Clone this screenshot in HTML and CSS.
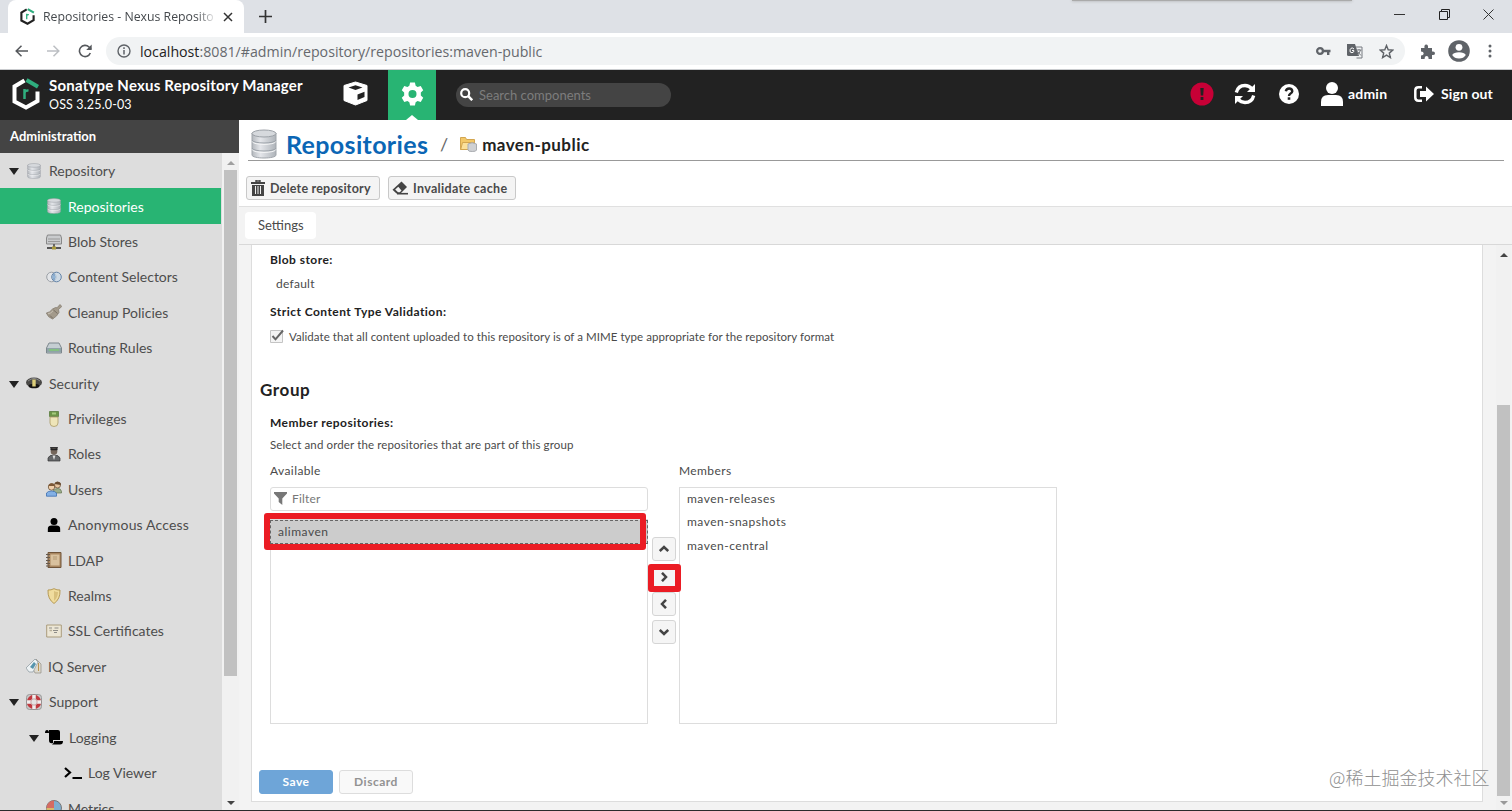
FILE: index.html
```
<!DOCTYPE html>
<html lang="en">
<head>
  <meta charset="UTF-8" />
  <title>Repositories - Nexus Repository Manager</title>
  <link rel="stylesheet" href="styles.css">
</head>
<body>
  <svg width="0" height="0" class="defs">
    <defs>
      <linearGradient id="metal" x1="0" x2="1" y1="0" y2="0">
        <stop offset="0" stop-color="#b4b8bd"/><stop offset=".35" stop-color="#e4e6ea"/><stop offset="1" stop-color="#aeb3b9"/>
      </linearGradient>
      <symbol id="db" viewBox="0 0 26 30">
        <path d="M1 4v22c0 4 24 4 24 0V4z" fill="url(#metal)" stroke="#a0a5ab"/>
        <ellipse cx="13" cy="4.5" rx="12" ry="3.5" fill="#d6d9dd" stroke="#9ca1a7"/>
        <path d="M1 11c1 4 23 4 24 0M1 19c1 4 23 4 24 0" fill="none" stroke="#9ca2a9" stroke-width="1"/>
        <path d="M1 12.400c1 4 23 4 24 0M1 20.400c1 4 23 4 24 0" fill="none" stroke="#f5f6f7"/>
      </symbol>
      <symbol id="person" viewBox="0 0 22 24">
        <circle cx="11" cy="6" r="6"/><path d="M0 24v-4q0-7 7-7h8q7 0 7 7v4z"/>
      </symbol>
      <symbol id="hexlogo" viewBox="0 0 28 32">
        <path d="M12.500 2.500L2.500 8.500v15L14 29.500l11.500-6.500V13.500" fill="none" stroke="currentColor" stroke-width="4"/>
        <path d="M14.500 2l11.500 6.800" fill="none" stroke="#2fae7e" stroke-width="4"/>
        <path d="M12.500 21v-10M12.500 14.500q1-2.500 4-1.800" fill="none" stroke="#2fae7e" stroke-width="2.500"/>
      </symbol>
    </defs>
  </svg>

  <div class="tabstrip">
    <div class="tab">
      <svg class="favicon" width="15" height="17"><use href="#hexlogo"/></svg>
      <span class="tab-title">Repositories - Nexus Reposito</span>
      <svg width="10" height="10" viewBox="0 0 10 10"><path d="M1 1l8 8M9 1l-8 8" stroke="#333" stroke-width="1.500"/></svg>
    </div>
    <svg class="newtab" width="13" height="13" viewBox="0 0 13 13"><path d="M6.500 0v13M0 6.500h13" stroke="#333" stroke-width="1.700"/></svg>
    <div class="strip-shadow"></div>
    <div class="window-buttons">
      <svg width="11" height="11" viewBox="0 0 11 11"><path d="M0 5.500h11" stroke="#333"/></svg>
      <svg width="11" height="11" viewBox="0 0 11 11"><path d="M.5 2.500h8v8h-8zM2.500 2.500v-2h8v8h-2" fill="none" stroke="#222"/></svg>
      <svg width="11" height="11" viewBox="0 0 11 11"><path d="M.5.5l10 10M10.500.5l-10 10" stroke="#333"/></svg>
    </div>
  </div>

  <div class="toolbar">
    <svg width="13" height="12" viewBox="0 0 13 12"><path d="M13 6H1M6.500 .7L1.200 6l5.300 5.300" fill="none" stroke="#55585c" stroke-width="1.500"/></svg>
    <svg width="13" height="12" viewBox="0 0 13 12"><path d="M0 6h12M6.500 .7L11.800 6l-5.300 5.300" fill="none" stroke="#bcbfc3" stroke-width="1.500"/></svg>
    <svg width="14" height="14" viewBox="0 0 14 14"><path d="M12.300 9A5.600 5.600 0 1 1 11 3L13 5" fill="none" stroke="#55585c" stroke-width="1.600"/><path d="M13.700 .5v5.500H8.200z" fill="#55585c"/></svg>
    <div class="address">
      <svg width="14" height="14" viewBox="0 0 14 14"><circle cx="7" cy="7" r="6" fill="none" stroke="#5f6368" stroke-width="1.400"/><path d="M7 6v4.500M7 3.300v1.600" stroke="#5f6368" stroke-width="1.500"/></svg>
      <span class="url"><b>localhost</b>:8081/#admin/repository/repositories:maven-public</span>
      <svg class="key" width="15" height="10" viewBox="0 0 15 10"><circle cx="4" cy="5" r="2.900" fill="none" stroke="#5f6368" stroke-width="2.200"/><path d="M7 5h7.500M12.200 5v4" stroke="#5f6368" stroke-width="2.400"/></svg>
      <svg width="16" height="15" viewBox="0 0 16 15"><path d="M0 0h8l4 12H1.500Q0 12 0 10.500z" fill="#5f6368"/><path d="M9 3h6v11H9.500" fill="none" stroke="#777b80"/><path d="M7 5Q5.500 3.300 4 4.300T3.200 8Q5 9.700 6.800 7.700V6.500H5" fill="none" stroke="#fff"/><path d="M9.500 6h5M12 5v1M13.500 6q-1 4-3.500 5M10.500 7.500l3.500 4" fill="none" stroke="#777b80"/></svg>
      <svg width="15" height="15" viewBox="0 0 15 15"><path d="M7.500 1.500l1.700 4.300 4.600.3-3.500 3 1.100 4.500-3.900-2.500-3.900 2.500 1.100-4.500-3.500-3 4.600-.3z" fill="none" stroke="#5f6368" stroke-width="1.400"/></svg>
    </div>
    <svg width="15" height="15" viewBox="0 0 15 15"><path d="M1 4h3.500q-.6-3.500 1.700-3.500T8 4h4v3.500q3-.5 3 1.700t-3 1.800v4H8.600q0-3-2-3t-2 3H1v-3.600q2.700-.2 2.700-2T1 7.500z" fill="#5f6368"/></svg>
    <svg class="profile" width="22" height="22" viewBox="0 0 22 22"><circle cx="11" cy="11" r="10.800" fill="#5f6368"/><circle cx="11" cy="7.300" r="3.400" fill="#fff"/><path d="M4.200 15q1.600-2.800 6.800-2.800t6.800 2.800q-2.200 3.600-6.800 3.600T4.200 15z" fill="#fff"/></svg>
    <svg class="dots" width="4" height="14" viewBox="0 0 4 14" fill="#5f6368"><circle cx="2" cy="2" r="1.500"/><circle cx="2" cy="7" r="1.500"/><circle cx="2" cy="12" r="1.500"/></svg>
  </div>

  <div class="header">
    <svg class="logo" width="28" height="32"><use href="#hexlogo"/></svg>
    <div class="product">
      <div class="product-name">Sonatype Nexus Repository Manager</div>
      <div class="product-version">OSS 3.25.0-03</div>
    </div>
    <div class="mode">
      <svg width="25" height="25" viewBox="0 0 25 25"><path d="M12.500 1L24 4.500v15L12.500 24 1 19.500v-15z" fill="#fff" stroke="#fff" stroke-linejoin="round"/><path d="M5.500 6.500l7-2.300 7 2.300-7 2.500zM14.500 13.500l7-2.800V16l-7 3z" fill="#222"/></svg>
    </div>
    <div class="mode active">
      <svg width="23" height="24" viewBox="0 0 24 24"><path fill="#fff" fill-rule="evenodd" d="M9.500 0h5l.8 3.400 2 1.200 3.300-1 2.600 4.400-2.500 2.400v3.200l2.500 2.400-2.600 4.400-3.300-1-2 1.200-.8 3.400h-5l-.8-3.400-2-1.200-3.300 1L.8 16l2.500-2.400v-3.200L.8 8l2.600-4.400 3.300 1 2-1.200zM12 7.800a4.200 4.200 0 1 0 0 8.400 4.200 4.200 0 1 0 0-8.400z"/></svg>
    </div>
    <div class="search">
      <svg width="13" height="13" viewBox="0 0 13 13"><circle cx="5.200" cy="5.200" r="4" fill="none" stroke="#fff" stroke-width="2.200"/><path d="M8.200 8.200l4 4" stroke="#fff" stroke-width="2.500"/></svg>
      <span>Search components</span>
    </div>
    <div class="header-right">
      <svg class="alert" width="24" height="24" viewBox="0 0 24 24"><circle cx="12" cy="12" r="11.500" fill="#c70036"/><path d="M10.300 6h3.400l-.5 7.500h-2.400zM10.600 15h2.800v3h-2.800z" fill="#222"/></svg>
      <svg class="refresh" width="22" height="22" viewBox="0 0 22 22"><path d="M2.300 9.500Q4 2.500 11 2.500q4 0 7 3.300M19.700 12.500Q18 19.500 11 19.500q-4 0-7-3.300" fill="none" stroke="#fff" stroke-width="3.300"/><path d="M21 1v8h-8zM1 21v-8h8z" fill="#fff"/></svg>
      <svg class="help" width="20" height="20" viewBox="0 0 20 20"><circle cx="10" cy="10" r="10" fill="#fff"/><path d="M6.800 7.300Q7.300 4.500 10.200 4.500T13.300 7.300Q13.300 8.600 11.300 9.700 10 10.500 10 12" fill="none" stroke="#222" stroke-width="2.400"/><path d="M8.700 13.300h2.600v2.500H8.700z" fill="#222"/></svg>
      <svg class="user" width="22" height="24" fill="#fff"><use href="#person"/></svg>
      <span class="admin">admin</span>
      <svg class="exit" width="20" height="16" viewBox="0 0 20 16"><path d="M8 1.300H4.500Q1.300 1.300 1.300 4.500v7q0 3.200 3.200 3.200H8" fill="none" stroke="#fff" stroke-width="2.500"/><path d="M6 5h6V.5L20 8l-8 7.500V11H6z" fill="#fff"/></svg>
      <span class="signout">Sign out</span>
    </div>
  </div>

  <div class="app">
    <div class="sidebar">
      <div class="sidebar-title">Administration</div>
      <div class="sidebar-body">
        <div class="tree">
          <div class="node top"><i class="arrow"></i><svg width="16" height="16"><use href="#db"/></svg><span>Repository</span></div>
          <div class="node leaf selected"><svg width="16" height="16"><use href="#db"/></svg><span>Repositories</span></div>
          <div class="node leaf">
            <svg width="16" height="16" viewBox="0 0 16 16"><path d="M1.500 1h13l1 3v6h-15V4z" fill="#c9cbcd" stroke="#888"/><path d="M2 5h12M2 7.500h12" stroke="#999"/><path d="M8 10v4" stroke="#666" stroke-width="2"/><path d="M1 14h14" stroke="#555" stroke-width="2"/><path d="M6 12.500h4v3H6z" fill="#a99a3c"/></svg>
            <span>Blob Stores</span></div>
          <div class="node leaf">
            <svg width="16" height="16" viewBox="0 0 16 16"><circle cx="5.500" cy="8" r="4.800" fill="#e3e5e8" stroke="#9ba0a6"/><circle cx="10.500" cy="8" r="4.800" fill="#c8d8e8" fill-opacity=".7" stroke="#6484a8"/><path d="M8 4.500q-2.500 3.500 0 7 2.500-3.500 0-7z" fill="#9fc2e4" stroke="#6a8fb5" stroke-width=".6"/></svg>
            <span>Content Selectors</span></div>
          <div class="node leaf">
            <svg width="16" height="16" viewBox="0 0 16 16"><path d="M14 .5l1.800 2-3.300 3 .5 3q-2 4-6.500 6.500Q2 13.500 .3 9q3.700-.5 6.200-4l3-1.500 1.500.3z" fill="#a39a8b" stroke="#81796c" stroke-width=".7"/><path d="M2 9.800q3-.3 5-3" fill="none" stroke="#c9c2b5"/><path d="M4 11.500l3 3M7.500 6l4 3.500" stroke="#776f64"/></svg>
            <span>Cleanup Policies</span></div>
          <div class="node leaf">
            <svg width="16" height="16" viewBox="0 0 16 16"><path d="M3 3h10l2.500 5v5H.5V8z" fill="#c5ced2" stroke="#7c868c"/><path d="M1 8h14v4.500H1z" fill="#8fa3a7"/><path d="M3 10h10" stroke="#7fd06f" stroke-width="1.300"/></svg>
            <span>Routing Rules</span></div>
          <div class="node top"><i class="arrow"></i>
            <svg width="16" height="16" viewBox="0 0 16 16"><ellipse cx="8" cy="7.500" rx="8" ry="5" fill="#4a4947"/><ellipse cx="8" cy="11" rx="5.500" ry="2.300" fill="#161514"/><path d="M2 6q6-5 12 0" stroke="#8a8a88" fill="none"/><path d="M6.300 4.500h3.400v7H6.300z" fill="#ddcf7a"/></svg>
            <span>Security</span></div>
          <div class="node leaf">
            <svg width="16" height="16" viewBox="0 0 16 16"><path d="M3.500 .5h9v5h-9z" fill="#6d9447" stroke="#4f7330" stroke-width=".7"/><path d="M6 1.500h4v2H6z" fill="#a6cb7c"/><path d="M4 6h8v6q0 3.500-4 3.500T4 12z" fill="#eee5b9" stroke="#a99b66" stroke-width=".8"/></svg>
            <span>Privileges</span></div>
          <div class="node leaf">
            <svg width="16" height="16" viewBox="0 0 16 16"><path d="M4 1h8l-1 3H5z" fill="#333"/><circle cx="8" cy="5.500" r="3.300" fill="#75675c"/><path d="M4.500 3.500h7" stroke="#222" stroke-width="1.500"/><path d="M2 15v-3q1-3 6-3t6 3v3z" fill="#66686a" stroke="#333" stroke-width=".7"/><path d="M6.500 9.500h3L8 14z" fill="#ddd"/></svg>
            <span>Roles</span></div>
          <div class="node leaf">
            <svg width="16" height="16" viewBox="0 0 16 16"><circle cx="11.500" cy="4" r="3" fill="#e7c49f" stroke="#6c5236" stroke-width=".8"/><path d="M7.500 12V9.500Q9 7.500 12 7.500t3.500 3V12z" fill="#9cae8c" stroke="#62724f" stroke-width=".7"/><path d="M8.700 3q1-3 4-2t2 3" fill="#674a30"/><circle cx="5.500" cy="6" r="3.200" fill="#f0cfab" stroke="#6c5236" stroke-width=".8"/><path d="M2.500 5Q3 2 6 2.300T8.700 5z" fill="#7c5836"/><path d="M.5 15.200V12Q2 10 5.500 10t5 2v3.200z" fill="#83b0e5" stroke="#3c6eae" stroke-width=".8"/></svg>
            <span>Users</span></div>
          <div class="node leaf anon"><svg width="16" height="14" viewBox="0 0 22 24"><use href="#person"/></svg><span>Anonymous Access</span></div>
          <div class="node leaf">
            <svg width="16" height="16" viewBox="0 0 16 16"><path d="M2 .5h13v15H2z" fill="#a98761" stroke="#70553a"/><path d="M4.500 2.500h9v11h-9z" fill="#d9c19e"/><path d="M7 5h4M7 7h4" stroke="#b39a75"/><path d="M0 2.500h4M0 5.500h4M0 8.500h4M0 11.500h4M0 14h4" stroke="#66594d"/></svg>
            <span>LDAP</span></div>
          <div class="node leaf">
            <svg width="16" height="16" viewBox="0 0 16 16"><path d="M8 .7q3 1.600 6 1.300.5 9-6 13.500Q1.500 11 2 2q3 .3 6-1.300z" fill="#f0dc9e" stroke="#b69a56"/><path d="M8 3q2 1.200 4 1-.2 6-4 9z" fill="#d9c07d"/></svg>
            <span>Realms</span></div>
          <div class="node leaf">
            <svg width="16" height="16" viewBox="0 0 16 16"><path d="M.7 2h14.600v12H.7z" fill="#ece6d5" stroke="#aa9c7c"/><path d="M3 5h3M8.500 5h4M7 7.500h5M8 9.500h3" stroke="#8e8d89"/><path d="M3.500 7.500h2.500" stroke="#b9b09a" stroke-width="1.500"/></svg>
            <span>SSL Certificates</span></div>
          <div class="node mid">
            <svg width="16" height="16" viewBox="0 0 16 16"><path d="M10 1l5 5v9H9l-2-4z" fill="#ddd9cd" stroke="#8f8c84" stroke-width=".7"/><path d="M0 10L9 1l3 3-5 10H3z" fill="#edf2f4" stroke="#87939b" stroke-width=".7"/><path d="M4 9l4-5 2 2-3 5z" fill="#5795ad"/><path d="M12.500 5v8" stroke="#b99553"/></svg>
            <span>IQ Server</span></div>
          <div class="node top"><i class="arrow"></i>
            <svg width="16" height="16" viewBox="0 0 16 16"><rect x=".5" y=".5" width="15" height="15" rx="3" fill="#c9c9c9" stroke="#999"/><circle cx="8" cy="8" r="5.200" fill="none" stroke="#c0393f" stroke-width="4"/><path d="M8 1v14M1 8h14" stroke="#eee" stroke-width="3.500"/><circle cx="8" cy="8" r="3.200" fill="#e4e4e4" stroke="#b9787b" stroke-width=".6"/></svg>
            <span>Support</span></div>
          <div class="node sub"><i class="arrow"></i>
            <svg width="18" height="15" viewBox="0 0 18 15"><path d="M0 3q0-3 2-3t2 3zM4 0h9q2 0 2 2v8H8v3Q4 14 4 10z"/><path d="M9 11h9q0 3.500-3 3.500H7Q9 14 9 11z"/></svg>
            <span>Logging</span></div>
          <div class="node deep">
            <svg width="18" height="14" viewBox="0 0 18 14"><path d="M1 2l5 4.500L1 11" fill="none" stroke="#000" stroke-width="2.200"/><path d="M8.500 12H18" stroke="#000" stroke-width="2"/></svg>
            <span>Log Viewer</span></div>
          <div class="node leaf">
            <svg width="16" height="16" viewBox="0 0 16 16"><circle cx="8" cy="8" r="7.500" fill="#7eaed0" stroke="#777"/><path d="M8 8V.5A7.500 7.500 0 0 0 .5 8z" fill="#d56b62"/><path d="M.5 8A7.500 7.500 0 0 0 8 15.500V8z" fill="#d9b96a"/></svg>
            <span>Metrics</span></div>
        </div>
        <div class="scrollbar">
          <svg width="8" height="5" viewBox="0 0 8 5"><path d="M0 5l4-4 4 4z" fill="#a0a0a0"/></svg>
          <div class="thumb"></div>
          <svg width="8" height="5" viewBox="0 0 8 5"><path d="M0 0l4 4 4-4z" fill="#444"/></svg>
        </div>
      </div>
    </div>

    <div class="main">
      <div class="crumbs">
        <svg width="26" height="30"><use href="#db"/></svg>
        <span class="crumb-root">Repositories</span>
        <span class="slash">/</span>
        <svg class="folder" width="17" height="16" viewBox="0 0 17 16"><path d="M.5 1.500h5l1 2h8v10H.5z" fill="#f3c868" stroke="#d3a651"/><path d="M2.500 6.500h12l-2 7H.7z" fill="#fbe09a" stroke="#d3a651"/><path d="M8 8v6q0 1.500 4.200 1.500T16.500 14V8Q12 5.500 8 8z" fill="#cfd1d4" stroke="#a9acb0"/></svg>
        <span class="crumb-leaf">maven-public</span>
      </div>
      <div class="actions">
        <div class="btn">
          <svg width="14" height="16" viewBox="0 0 14 16"><path d="M5 0h4v2H5z" fill="none" stroke="#444" stroke-width="1.400"/><path d="M0 2h14v2H0zM1 5h12v11H1z" fill="#444"/><path d="M4.500 6v8M7 6v8M9.500 6v8" stroke="#eee"/></svg>
          <span>Delete repository</span>
        </div>
        <div class="btn">
          <svg width="16" height="14" viewBox="0 0 16 14"><path d="M9.500 .5l5.500 5.500-6.500 6.500H4.500L.5 8.700z" fill="#444"/><path d="M3.200 8.500l2.800 2.700h1.800l1.700-1.600L6.300 5.700z" fill="#f4f4f4"/><path d="M5 12.700h11" stroke="#444" stroke-width="1.600"/></svg>
          <span>Invalidate cache</span>
        </div>
      </div>
      <div class="tabs"><div class="settings">Settings</div></div>

      <div class="content">
        <div class="panel">
          <div class="label">Blob store:</div>
          <div class="value">default</div>
          <div class="label">Strict Content Type Validation:</div>
          <div class="check">
            <svg width="14" height="14" viewBox="0 0 14 14"><path d="M.5 1.500h12v12H.5z" fill="#f4f4f4" stroke="#c4c4c4"/><path d="M2.500 7l3 3.300L13 1.500" fill="none" stroke="#666" stroke-width="2"/></svg>
            <span>Validate that all content uploaded to this repository is of a MIME type appropriate for the repository format</span>
          </div>
          <h2>Group</h2>
          <div class="label">Member repositories:</div>
          <div class="hint">Select and order the repositories that are part of this group</div>
          <div class="picker">
            <div class="column">
              <div class="column-title">Available</div>
              <div class="filter">
                <svg width="13" height="13" viewBox="0 0 13 13"><path d="M0 0h13v1.500L8.300 6.500V13L4.700 10V6.500L0 1.500z" fill="#777"/></svg>
                <span>Filter</span>
              </div>
              <div class="list available">
                <div class="item focused">alimaven<div class="mark mark-item"></div></div>
              </div>
            </div>
            <div class="movers">
              <div class="mover"><svg width="10" height="10" viewBox="0 0 10 10"><path d="M.8 7L5 3l4.200 4"/></svg></div>
              <div class="mover"><svg width="10" height="10" viewBox="0 0 10 10"><path d="M3 .8L7 5 3 9.200"/></svg><div class="mark mark-button"></div></div>
              <div class="mover"><svg width="10" height="10" viewBox="0 0 10 10"><path d="M7 .8L3 5l4 4.200"/></svg></div>
              <div class="mover"><svg width="10" height="10" viewBox="0 0 10 10"><path d="M.8 3L5 7l4.200-4"/></svg></div>
            </div>
            <div class="column">
              <div class="column-title">Members</div>
              <div class="list members">
                <div class="item">maven-releases</div>
                <div class="item">maven-snapshots</div>
                <div class="item">maven-central</div>
              </div>
            </div>
          </div>
          <div class="footer">
            <div class="save">Save</div>
            <div class="discard">Discard</div>
          </div>
        </div>
        <div class="scrollbar page-scroll">
          <svg width="8" height="5" viewBox="0 0 8 5"><path d="M0 5l4-4 4 4z" fill="#444"/></svg>
          <div class="thumb"></div>
          <svg width="8" height="5" viewBox="0 0 8 5"><path d="M0 0l4 4 4-4z" fill="#999"/></svg>
        </div>
      </div>
    </div>
  </div>
  <div class="watermark">@稀土掘金技术社区</div>
</body>
</html>
```
FILE: styles.css
```
* {
  box-sizing: border-box;
}
body {
  margin: 0;
  width: 1512px;
  height: 811px;
  overflow: hidden;
  position: relative;
  font-family: Lato, "Liberation Sans", sans-serif;
  font-size: 12px;
  color: #4a4a4a;
  background: #fff;
  border-bottom: 1px solid #2b2b2b;
  display: flex;
  flex-direction: column;
}
svg {
  display: block;
  flex: none;
}
.defs {
  position: absolute;
}
span, .label, .item, .hint, .column-title {
  white-space: nowrap;
}

/* browser chrome */
.tabstrip {
  height: 33px;
  flex: none;
  background: #dee1e6;
  display: flex;
  align-items: center;
  padding-left: 8px;
  font-family: "Open Sans", "Noto Sans", sans-serif;
}
.tab {
  width: 236px;
  height: 33px;
  background: #fff;
  border-radius: 8px 8px 0 0;
  display: flex;
  align-items: center;
  padding: 0 11px 0 12px;
}
.favicon {
  color: #222;
}
.tab-title {
  margin-left: 8px;
  width: 174px;
  margin-right: 6px;
  font-size: 12.300px;
  color: #45494d;
  -webkit-mask-image: linear-gradient(90deg, #000 88%, transparent);
}
.newtab {
  margin-left: 15px;
}
.strip-shadow {
  margin-left: 800px;
  align-self: flex-start;
  width: 280px;
  height: 1px;
  background: #aaa;
  box-shadow: 0 0 3px #888;
}
.window-buttons {
  margin-left: 42px;
  margin-top: -4px;
  display: flex;
  gap: 33.500px;
}
.toolbar {
  height: 37px;
  flex: none;
  display: flex;
  align-items: center;
  padding-left: 15px;
  border-bottom: 1px solid #c9cbce;
  font-family: "Open Sans", "Noto Sans", sans-serif;
}
.toolbar > svg + svg {
  margin-left: 19px;
}
.toolbar > svg:nth-child(3) {
  margin-left: 18px;
}
.address {
  height: 28px;
  width: 1299px;
  margin: 0 15px 0 14px;
  border-radius: 14px;
  background: #f1f3f4;
  display: flex;
  align-items: center;
  padding: 0 11px 0 11px;
}
.url {
  margin-left: 9px;
  font-size: 14.200px;
  color: #66696e;
}
.url b {
  font-weight: 400;
  color: #222;
}
.key {
  margin-left: auto;
}
.address svg + svg {
  margin-left: 16px;
}
.toolbar > .profile {
  margin-left: 13px;
}
.toolbar > .dots {
  margin-left: 18px;
}

/* nexus header */
.header {
  height: 50px;
  flex: none;
  background: #222;
  color: #fff;
  display: flex;
  align-items: center;
  padding-left: 12px;
}
.logo {
  margin-top: -2px;
}
.product {
  width: 291px;
  padding-left: 9px;
}
.product-name {
  font-size: 15px;
  font-weight: 700;
  letter-spacing: .21px;
  line-height: 20px;
  margin-top: -1px;
}
.product-version {
  font-size: 12.500px;
  letter-spacing: .15px;
  line-height: 18px;
  margin-top: 1px;
}
.mode {
  width: 48px;
  height: 50px;
  display: flex;
  align-items: center;
  justify-content: center;
  padding-bottom: 3px;
}
.active {
  margin-left: 9px;
  background: #28b473;
  position: relative;
}
.active::after {
  content: "";
  position: absolute;
  left: 18px;
  bottom: 0;
  border: 6px solid transparent;
  border-bottom: 5px solid #fff;
  border-top: 0;
}
.search {
  margin: -1px 0 0 20px;
  width: 215px;
  height: 24px;
  border-radius: 12px;
  background: #444;
  color: #7d7d7d;
  display: flex;
  align-items: center;
  padding-left: 4px;
  gap: 6px;
  font-size: 13px;
}
.header-right {
  margin-left: 519px;
  height: 47px;
  margin-top: -3px;
  display: flex;
  align-items: center;
  font-size: 14px;
  font-weight: 700;
}
.refresh {
  margin-left: 20px;
}
.help {
  margin-left: 23px;
}
.user {
  margin-left: 22px;
}
.admin {
  margin-left: 5px;
  width: 66px;
  letter-spacing: .2px;
}
.signout {
  margin-left: 7px;
  letter-spacing: .1px;
}

/* sidebar */
.app {
  flex: 1;
  min-height: 0;
  display: flex;
}
.sidebar {
  width: 239px;
  flex: none;
  display: flex;
  flex-direction: column;
}
.sidebar-title {
  height: 33px;
  flex: none;
  background: #444;
  color: #fff;
  font-size: 13px;
  font-weight: 700;
  line-height: 33px;
  padding-left: 10px;
}
.sidebar-body {
  flex: 1;
  min-height: 0;
  display: flex;
}
.tree {
  width: 222px;
  background: #ddd;
  overflow: hidden;
}
.node {
  height: 35.410px;
  display: flex;
  align-items: center;
  font-size: 14px;
  color: #4d4d4d;
  gap: 6px;
}
.node.top, .node.sub {
  gap: 7px;
}
.node.sub {
  gap: 6px;
}
.top {
  padding-left: 9px;
}
.mid {
  padding-left: 26px;
}
.leaf {
  padding-left: 46px;
}
.anon {
  letter-spacing: .16px;
}
.sub {
  padding-left: 29px;
}
.deep {
  padding-left: 64px;
}
.selected {
  background: #28b473;
  color: #fff;
  width: 221px;
}
.arrow {
  border: 5px solid transparent;
  border-top: 7px solid #222;
  border-bottom: 0;
  margin-top: 2px;
}
.scrollbar {
  width: 17px;
  background: #f1f1f1;
  display: flex;
  flex-direction: column;
  align-items: center;
  justify-content: space-between;
  padding: 7px 0 4px;
}
.thumb {
  width: 13px;
  height: 506px;
  margin: 5px 0 auto;
  background: #c1c1c1;
}

/* main area */
.main {
  flex: 1;
  min-width: 0;
  display: flex;
  flex-direction: column;
}
.crumbs {
  height: 41px;
  margin: 0 8px 0 9px;
  padding: 7px 0 0 3px;
  border-bottom: 1px solid #999;
  display: flex;
  align-items: center;
}
.crumb-root {
  margin-left: 9px;
  width: 154px;
  font-size: 25px;
  font-weight: 700;
  letter-spacing: .35px;
  color: #0b66b5;
}
.slash {
  font-size: 18px;
  color: #666;
}
.folder {
  margin-left: 12px;
}
.crumb-leaf {
  margin: 2px 0 0 5px;
  font-size: 17px;
  font-weight: 700;
  letter-spacing: .45px;
  color: #222;
}
.actions {
  height: 45px;
  flex: none;
  display: flex;
  gap: 8px;
  padding: 15px 0 0 7px;
}
.btn {
  height: 24px;
  border: 1px solid #c9c9c9;
  border-radius: 3px;
  background: #f4f4f4;
  display: flex;
  align-items: center;
  gap: 5px;
  padding-left: 4px;
  font-size: 12.500px;
  font-weight: 700;
  letter-spacing: .2px;
  width: 134px;
}
.btn + .btn {
  width: 128px;
  padding-left: 3px;
  letter-spacing: .32px;
}
.tabs {
  height: 39px;
  flex: none;
  background: #f3f3f3;
  border-top: 1px solid #e0e0e0;
  border-bottom: 1px solid #d8d8d8;
  padding: 5px 0 0 6px;
}
.settings {
  width: 71px;
  height: 27px;
  background: #fff;
  border-radius: 4px;
  font-size: 13px;
  line-height: 27px;
  padding-left: 13px;
}
.content {
  flex: 1;
  min-height: 0;
  background: #f3f3f3;
  display: flex;
  padding-left: 12px;
}
.panel {
  width: 1232px;
  height: 557px;
  background: #fff;
  border: 1px solid #ddd;
  border-top: 0;
  padding: 5px 0 0 18px;
}
.page-scroll {
  margin-left: 13px;
  width: 15px;
}
.page-scroll .thumb {
  height: 391px;
  margin: 148px 0 auto;
}
.label {
  height: 20px;
  line-height: 20px;
  font-weight: 700;
  letter-spacing: .46px;
  color: #222;
}
.value {
  height: 24px;
  line-height: 24px;
  margin: 2px 0 6px;
  padding-left: 6px;
  letter-spacing: .25px;
}
.check {
  height: 20px;
  margin-top: 4px;
  display: flex;
  align-items: center;
  gap: 5px;
  font-size: 11.500px;
  letter-spacing: .055px;
}
h2 {
  margin: 32px 0 11px -10px;
  font-size: 17px;
  line-height: 24px;
  letter-spacing: .6px;
  color: #222;
}
.hint {
  margin-top: 2px;
  height: 20px;
  line-height: 20px;
  font-size: 11.500px;
  letter-spacing: .125px;
}
.picker {
  display: flex;
  margin-top: 6px;
}
.column {
  width: 378px;
}
.column-title {
  height: 20px;
  line-height: 20px;
  margin-bottom: 6px;
  letter-spacing: .4px;
}
.filter {
  height: 24px;
  border: 1px solid #ddd;
  border-radius: 3px;
  display: flex;
  align-items: center;
  gap: 5px;
  padding: 0 0 1px 3px;
  color: #777;
  letter-spacing: .2px;
}
.list {
  border: 1px solid #ddd;
}
.available {
  margin-top: 8px;
  height: 205px;
}
.members {
  height: 237px;
}
.item {
  height: 23.400px;
  line-height: 22px;
  padding-left: 7px;
  letter-spacing: .5px;
}
.focused {
  height: 24px;
  margin: 0 -1px;
  background: #ccc;
  border: 1px dashed #666;
  position: relative;
}
.movers {
  width: 31px;
  padding: 76px 0 0 4px;
}
.mover {
  width: 24px;
  height: 24px;
  margin-bottom: 3.500px;
  border: 1px solid #d5d5d5;
  border-radius: 3px;
  background: #f5f5f5;
  display: flex;
  align-items: center;
  justify-content: center;
  position: relative;
}
.mover path {
  fill: none;
  stroke: #444;
  stroke-width: 2.500px;
}

/* red highlight boxes */
.mark {
  position: absolute;
  border: 6px solid #eb1c24;
  border-radius: 3px;
}
.mark-item {
  left: -7px;
  top: -8px;
  width: 382px;
  height: 37px;
}
.mark-button {
  left: -5px;
  top: -2px;
  width: 33px;
  height: 28px;
}
.footer {
  display: flex;
  gap: 6px;
  margin: 46px 0 0 -11px;
  font-weight: 700;
  letter-spacing: .5px;
  text-align: center;
  line-height: 22px;
}
.save, .discard {
  width: 74px;
  height: 24px;
  border-radius: 3px;
  border: 1px solid #6ea5d8;
  background: #6ea5d8;
  color: #fff;
}
.discard {
  border-color: #ddd;
  background: #f9f9f9;
  color: #929292;
}
.watermark {
  position: absolute;
  left: 1329px;
  top: 764px;
  font-family: "Noto Sans CJK SC", sans-serif;
  font-size: 18px;
  line-height: 26px;
  font-weight: 300;
  color: #8f8f8f;
}
```
